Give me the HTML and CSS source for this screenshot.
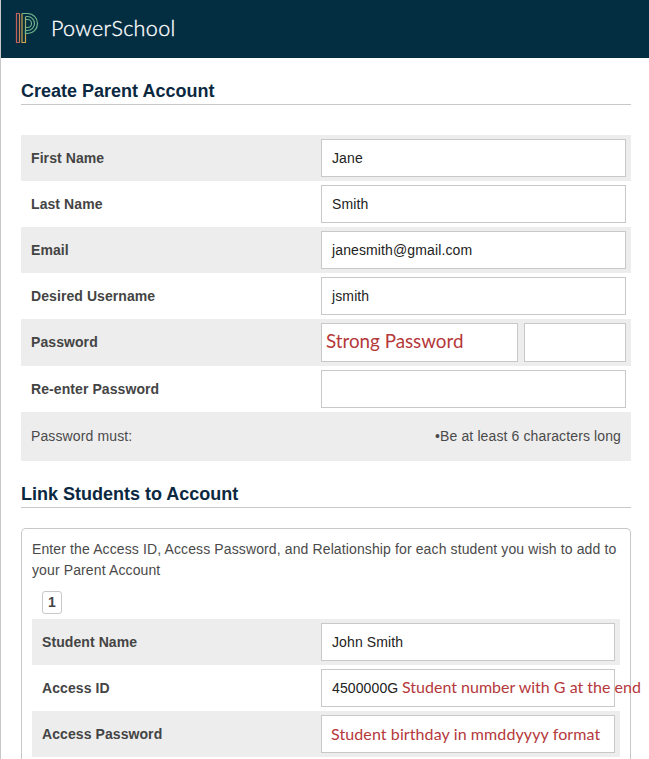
FILE: index.html
```html
<!DOCTYPE html>
<html lang="en">
<head>
<meta charset="utf-8">
<title>PowerSchool - Create Parent Account</title>
<link rel="stylesheet" href="styles.css">
</head>
<body>
<div class="page">
  <header class="brand">
    <svg class="mark" width="24" height="32" viewBox="0 0 24 32" fill="none" stroke-width="1.2">
      <path stroke="#c4625c" d="M4.500 1.500H1.500V30.500H4.500"/>
      <path stroke="#cf7e58" d="M4.500 1.500V30.500"/>
      <path stroke="#d0a64e" d="M7 1.500V30.500H10.500V21.500"/>
      <path stroke="#a9ad68" d="M10.500 21.500V5"/>
      <path stroke="#70b58b" d="M7 1.500H12.500A10 10 0 0 1 12.500 21.500H10.500V18.500H12.500A7 7 0 0 0 12.500 4.500H10.500"/>
      <path stroke="#70b58b" d="M10.500 7.500H12.500A4 4 0 0 1 12.500 15.500H10.500"/>
    </svg>
    <span class="wordmark">PowerSchool</span>
  </header>
  <main class="content">
    <h1 class="heading">Create Parent Account</h1>
    <section class="rows account">
      <div class="row shaded"><span class="label">First Name</span><div class="field">Jane</div></div>
      <div class="row"><span class="label">Last Name</span><div class="field">Smith</div></div>
      <div class="row shaded"><span class="label">Email</span><div class="field">janesmith@gmail.com</div></div>
      <div class="row"><span class="label">Desired Username</span><div class="field">jsmith</div></div>
      <div class="row shaded tall"><span class="label">Password</span>
        <div class="pair"><div class="field"><span class="note strong">Strong Password</span></div><div class="field meter"></div></div></div>
      <div class="row"><span class="label">Re-enter Password</span><div class="field"></div></div>
      <div class="row shaded rule"><span>Password must:</span><span>•Be at least 6 characters long</span></div>
    </section>
    <h1 class="heading link">Link Students to Account</h1>
    <section class="box">
      <p class="intro">Enter the Access ID, Access Password, and Relationship for each student you wish to add to<br>your Parent Account</p>
      <div class="number">1</div>
      <div class="rows students">
        <div class="row shaded"><span class="label">Student Name</span><div class="field">John Smith</div></div>
        <div class="row"><span class="label">Access ID</span><div class="field">4500000G<span class="note id">Student number with G at the end</span></div></div>
        <div class="row shaded"><span class="label">Access Password</span><div class="field"><span class="note birthday">Student birthday in mmddyyyy format</span></div></div>
      </div>
    </section>
  </main>
</div>
</body>
</html>
```
FILE: styles.css
```css
* { box-sizing: border-box; }
body { margin: 0; background: #fff; font: 14px/21px "Liberation Sans", Arial, sans-serif; letter-spacing: .12px; color: #4a4a4a; }
.page { height: 759px; overflow: hidden; border-left: 1px solid #c8c8c8; }
.brand { height: 58px; margin-left: -1px; padding: 12px 0 0 14px; background: #032d41; border-left: 1px solid #587482; display: flex; align-items: flex-start; }
.mark { flex: none; }
.wordmark { margin: 3px 0 0 12px; font: 300 21.500px/26px Lato, sans-serif; letter-spacing: .35px; color: #fff; -webkit-text-stroke: .35px #fff; }
.content { width: 610px; margin-left: 20px; }
.heading { margin: 20px 0 0; height: 27px; border-bottom: 1px solid #c8c8c8; font-size: 18px; line-height: 26px; letter-spacing: 0; color: #0b2841; }
.account { margin-top: 30px; }
.row { display: flex; align-items: center; height: 46px; padding: 0 5px 0 10px; }
.shaded { background: #ededed; }
.tall { height: 47px; }
.label { width: 290px; flex: none; font-weight: bold; letter-spacing: .08px; color: #444; }
.field { position: relative; flex: 1; height: 38px; border: 1px solid #c8c8c8; background: #fff; padding: 0 10px; line-height: 37px; color: #222; white-space: nowrap; }
.pair { flex: 1; display: flex; gap: 6px; }
.pair .field { height: 39px; }
.pair .meter { flex: none; width: 102px; }
.rule { height: 49px; justify-content: space-between; padding-right: 10px; }
.link { margin-top: 20px; }
.box { margin-top: 20px; height: 250px; padding: 10px 10px 0; border: 1px solid #c8c8c8; border-bottom: 0; border-radius: 5px 5px 0 0; }
.intro { margin: 0; white-space: nowrap; }
.number { width: 20px; height: 23px; margin: 10px 0 5px 10px; border: 1px solid #c8c8c8; border-radius: 3px; font-weight: bold; text-align: center; line-height: 21px; color: #444; }
.students .label { width: 279px; }
.note { position: absolute; top: 0; font-family: Lato, sans-serif; letter-spacing: 0; color: #b5383b; }
.strong { left: 4px; font-size: 18.800px; line-height: 34px; }
.id { left: 80px; font-size: 16px; line-height: 33px; }
.birthday { left: 9px; font-size: 16px; line-height: 36px; letter-spacing: .1px; }
```
